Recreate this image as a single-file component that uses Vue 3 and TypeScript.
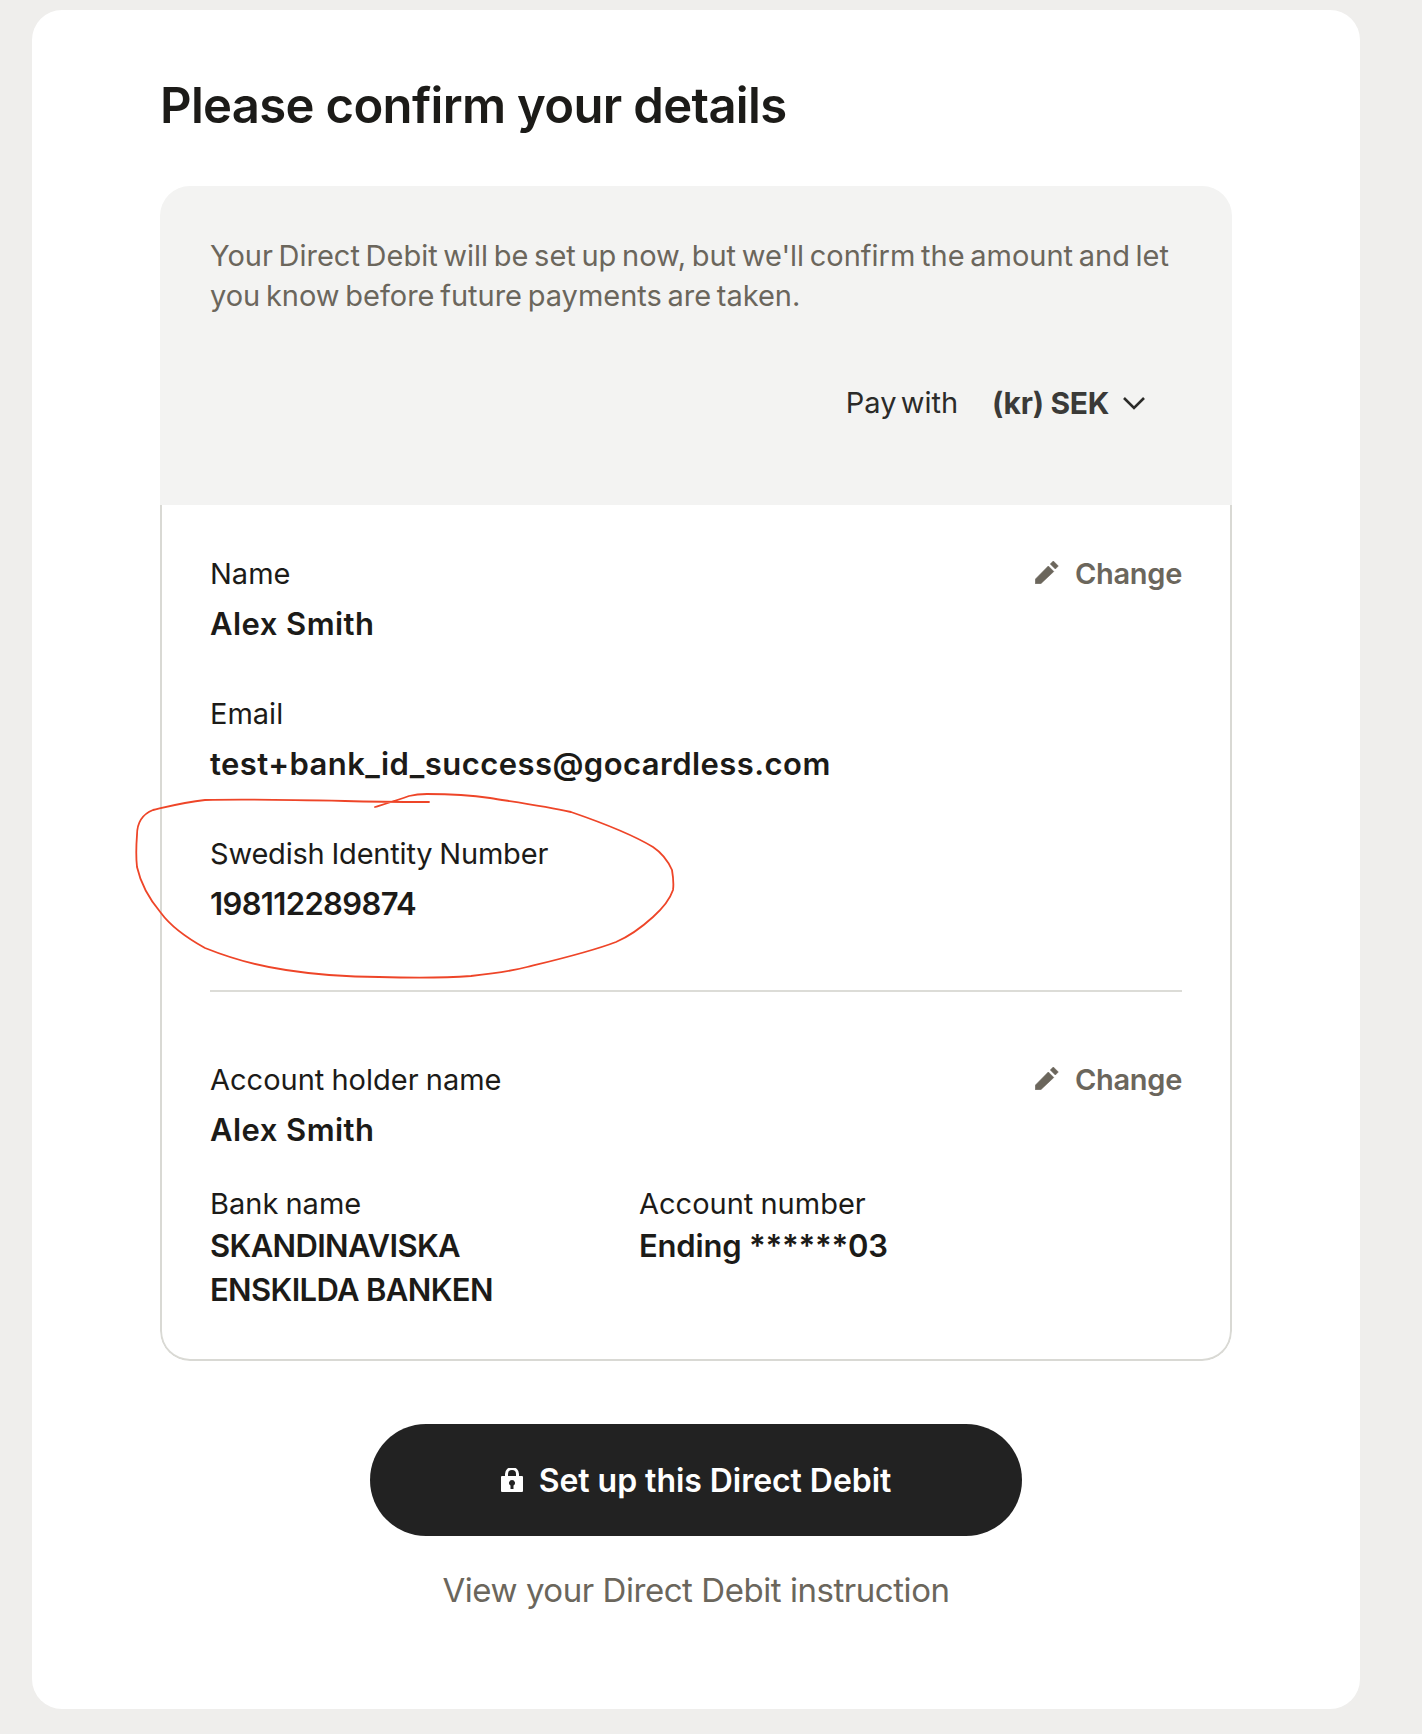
<script setup lang="ts">
interface Field { label: string; value: string; tight?: boolean }
const contact: Field[] = [
  { label: 'Name', value: 'Alex Smith' },
  { label: 'Email', value: 'test+bank_id_success@gocardless.com' },
  { label: 'Swedish Identity Number', value: '198112289874', tight: true },
]
</script>

<template>
  <div class="page">
    <main class="card">
      <h1 class="title">Please confirm your details</h1>
      <section class="panel">
        <div class="intro">
          <p class="intro-text">Your Direct Debit will be set up now, but we'll confirm the amount and let you know before future payments are taken.</p>
          <div class="pay">
            <span class="pay-label">Pay with</span>
            <span class="pay-currency">(kr) SEK</span>
            <svg class="chevron" viewBox="0 0 24 14" width="24" height="14" fill="none" stroke="#2b2b29" stroke-width="2.6"><path d="M2 2l10 10L22 2" /></svg>
          </div>
        </div>
        <div class="details">
          <div class="contact">
            <div v-for="(f, i) in contact" :key="f.label" class="field">
              <div class="label-row">
                <span class="label" :class="{ narrow: f.tight }">{{ f.label }}</span>
                <a v-if="i === 0" class="change">
                  <svg viewBox="0 0 24 24" width="24" height="24" fill="#6b665c" stroke="#6b665c" stroke-width="0.6" stroke-linejoin="round"><path d="M.3 23.700V19.200L13.300 6l5.500 5.500L5.800 23.700zM15.300 4l3-3 5 5-3 3z" /></svg>
                  <span>Change</span>
                </a>
              </div>
              <div class="value" :class="{ caps: f.tight }">{{ f.value }}</div>
            </div>
          </div>
          <hr class="divider" />
          <div class="label-row">
            <span class="label">Account holder name</span>
            <a class="change">
              <svg viewBox="0 0 24 24" width="24" height="24" fill="#6b665c" stroke="#6b665c" stroke-width="0.6" stroke-linejoin="round"><path d="M.3 23.700V19.200L13.300 6l5.500 5.500L5.800 23.700zM15.300 4l3-3 5 5-3 3z" /></svg>
              <span>Change</span>
            </a>
          </div>
          <div class="value">Alex Smith</div>
          <div class="bank">
            <div class="bank-col">
              <div class="label">Bank name</div>
              <div class="value stacked caps">SKANDINAVISKA ENSKILDA BANKEN</div>
            </div>
            <div>
              <div class="label">Account number</div>
              <div class="value stacked mixed">Ending ******03</div>
            </div>
          </div>
        </div>
      </section>
      <button class="submit">
        <svg viewBox="0 0 22 24" width="22" height="24">
          <path d="M5.500 9V6a5.500 5.500 0 0 1 11 0v3" fill="none" stroke="#fff" stroke-width="3" />
          <path d="M1 8h20a1 1 0 0 1 1 1v14a1 1 0 0 1-1 1H1a1 1 0 0 1-1-1V9a1 1 0 0 1 1-1zm10 4a3 3 0 0 0-1.500 5.600V21h3v-3.400A3 3 0 0 0 11 12z" fill="#fff" fill-rule="evenodd" />
        </svg>
        <span>Set up this Direct Debit</span>
      </button>
      <a class="instruction">View your Direct Debit instruction</a>
    </main>
    <svg class="scribble" viewBox="0 0 1422 1734" width="1422" height="1734" fill="none" stroke="#ee4528" stroke-width="1.8" stroke-linecap="round">
      <path d="M429 802 C400 802 379 802 345 801 C300 800 240 799 205 800 C185 802 170 806 153 810 C143 814 137 822 137 835 C136 848 136 858 137 867 C141 885 150 900 161 913 C172 928 187 938 205 948 C230 958 258 966 286 970 C318 975 348 977 379 977 C410 978 445 978 471 976 C490 974 508 972 527 967 C560 959 590 952 616 942 C630 936 642 927 653 917 C663 908 670 899 673 890 C674 883 673 876 672 870 C668 861 662 853 653 847 C630 833 600 822 571 812 C545 806 515 802 490 798 C470 795 445 794 427 794 C418 794 413 795 409 796 C398 800 388 803 375 807" />
    </svg>
  </div>
</template>

<style>
html, body { margin: 0; background: #efeeec; }
</style>

<style scoped>
.page {
  position: relative;
  box-sizing: border-box;
  width: 1422px;
  height: 1734px;
  padding: 10px 62px 25px 32px;
  background: #efeeec;
  font-family: Inter, "Liberation Sans", sans-serif;
  color: #1c1b18;
}
.card {
  box-sizing: border-box;
  height: 1699px;
  padding: 66px 128px 0;
  background: #fff;
  border-radius: 30px;
  display: flex;
  flex-direction: column;
}
.title {
  margin: 0 0 50px;
  font-size: 49px;
  line-height: 60px;
  font-weight: 600;
  letter-spacing: -0.67px;
}
.panel {
  border-radius: 30px;
  overflow: hidden;
}
.intro {
  height: 319px;
  box-sizing: border-box;
  padding: 50px 50px 0;
  background: #f3f3f2;
}
.intro-text {
  margin: 0;
  font-size: 29px;
  line-height: 40px;
  color: #6b665c;
  word-spacing: -2.5px;
}
.pay {
  margin-top: 67px;
  display: flex;
  align-items: center;
  justify-content: flex-end;
  padding-right: 36px;
  line-height: 40px;
  font-size: 29px;
}
.pay-label { word-spacing: -4px; color: #2b2b29; }
.pay-currency { margin-left: 34px; font-size: 30px; font-weight: 700; color: #3a3a38; letter-spacing: -0.3px; }
.chevron { margin-left: 13px; }
.details {
  padding: 49px 48px 47px;
  border: 2px solid #d9d9d4;
  border-top: 0;
  border-radius: 0 0 30px 30px;
}
.field { margin-bottom: 48px; }
.field:last-child { margin-bottom: 0; }
.label-row {
  display: flex;
  justify-content: space-between;
  align-items: center;
  height: 40px;
}
.label { font-size: 29px; line-height: 40px; word-spacing: -1px; }
.label.narrow { letter-spacing: -0.2px; }
.value {
  margin-top: 8px;
  font-size: 31px;
  line-height: 44px;
  font-weight: 600;
  letter-spacing: 0.45px;
}
.value.stacked { margin-top: 0; }
.value.caps { letter-spacing: -0.65px; }
.value.mixed { letter-spacing: -0.2px; }
.change {
  display: flex;
  align-items: center;
  gap: 16px;
  margin-top: -2px;
  font-size: 29px;
  font-weight: 600;
  color: #6b665c;
  letter-spacing: -0.3px;
}
.change svg { margin-bottom: 3px; }
.divider {
  margin: 64px 0 68px;
  border: 0;
  border-top: 2px solid #dcdcd7;
}
.bank {
  margin-top: 32px;
  display: flex;
}
.bank-col { width: 429px; }
.bank-col .value { width: 340px; }
.submit {
  align-self: center;
  margin-top: 63px;
  width: 652px;
  height: 112px;
  border: 0;
  border-radius: 56px;
  background: #222;
  color: #fff;
  display: flex;
  align-items: center;
  justify-content: center;
  gap: 16px;
  font-family: inherit;
  font-size: 32px;
  font-weight: 600;
  letter-spacing: -0.05px;
}
.instruction {
  margin-top: 34px;
  text-align: center;
  font-size: 33px;
  line-height: 40px;
  color: #6b665c;
  letter-spacing: -0.45px;
}
.scribble {
  position: absolute;
  top: 0;
  left: 0;
  pointer-events: none;
}
</style>
